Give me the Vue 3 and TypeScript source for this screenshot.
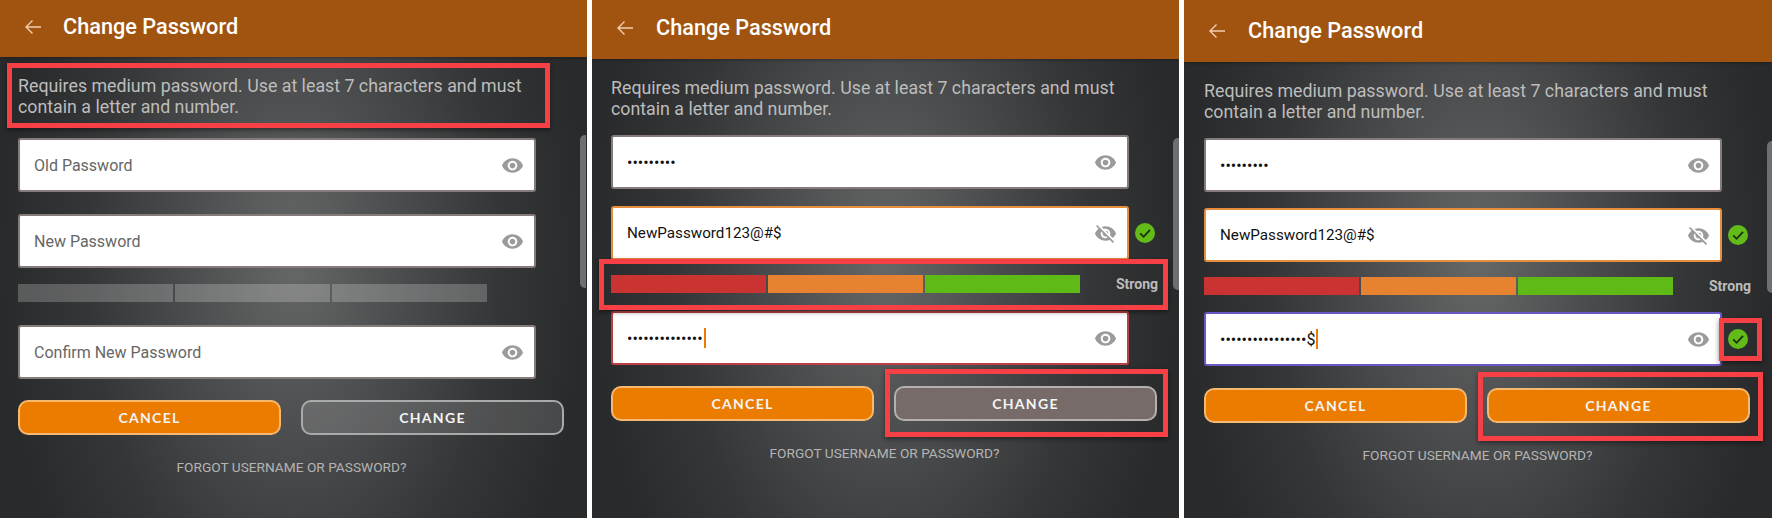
<script setup lang="ts">
type Field = {
  placeholder?: string
  value?: string
  state?: 'active' | 'error' | 'focus'
  hidden?: boolean
  caret?: boolean
  valid?: boolean
}

type Screen = {
  id: string
  fields: Field[]
  lit: boolean
  label?: string
  changeClass: string
  marks: string[]
}

const eye =
  'M12 4.5C7 4.5 2.73 7.61 1 12c1.73 4.39 6 7.5 11 7.5s9.27-3.11 11-7.5c-1.73-4.39-6-7.5-11-7.5zM12 17c-2.76 0-5-2.24-5-5s2.24-5 5-5 5 2.24 5 5-2.24 5-5 5zm0-8c-1.66 0-3 1.34-3 3s1.34 3 3 3 3-1.34 3-3-1.34-3-3-3z'
const eyeOff =
  'M12 7c2.76 0 5 2.24 5 5 0 .65-.13 1.26-.36 1.83l2.92 2.92c1.51-1.26 2.7-2.89 3.43-4.75-1.73-4.39-6-7.5-11-7.5-1.4 0-2.74.25-3.98.7l2.16 2.16C10.74 7.13 11.35 7 12 7zM2 4.27l2.28 2.28.46.46C3.08 8.3 1.78 10.02 1 12c1.73 4.39 6 7.5 11 7.5 1.55 0 3.03-.3 4.38-.84l.42.42L19.73 22 21 20.73 3.27 3 2 4.27zM7.53 9.8l1.55 1.55c-.05.21-.08.43-.08.65 0 1.66 1.34 3 3 3 .22 0 .44-.03.65-.08l1.55 1.55c-.67.33-1.41.53-2.2.53-2.76 0-5-2.24-5-5 0-.79.2-1.53.53-2.2zm4.31-.78l3.15 3.15.02-.16c0-1.66-1.34-3-3-3l-.17.01z'

const oldDots = '•••••••••'

const isMasked = (field: Field) => field.value?.startsWith('•') ?? false

const screens: Screen[] = [
  {
    id: 's1',
    fields: [
      { placeholder: 'Old Password' },
      { placeholder: 'New Password' },
      { placeholder: 'Confirm New Password' },
    ],
    lit: false,
    changeClass: 'btn-idle',
    marks: ['mark-note'],
  },
  {
    id: 's2',
    fields: [
      { value: oldDots },
      { value: 'NewPassword123@#$', state: 'active', hidden: true, valid: true },
      { value: '••••••••••••••', state: 'error', caret: true },
    ],
    lit: true,
    label: 'Strong',
    changeClass: 'btn-muted',
    marks: ['mark-bars', 'mark-change'],
  },
  {
    id: 's3',
    fields: [
      { value: oldDots },
      { value: 'NewPassword123@#$', state: 'active', hidden: true, valid: true },
      { value: '••••••••••••••••$', state: 'focus', caret: true, valid: true },
    ],
    lit: true,
    label: 'Strong',
    changeClass: 'btn-orange',
    marks: ['mark-check', 'mark-change'],
  },
]
</script>

<template>
  <div class="page">
    <section v-for="screen in screens" :key="screen.id" class="screen" :class="screen.id">
      <header class="topbar">
        <svg class="back" width="18" height="16" viewBox="0 0 18 16" fill="none">
          <path d="M17 8H2M8.5 1.5 2 8l6.5 6.5" stroke="currentColor" stroke-width="1.4" />
        </svg>
        <h1>Change Password</h1>
      </header>

      <div class="body">
        <p class="note">Requires medium password. Use at least 7 characters and must contain a letter and number.</p>

        <template v-for="(field, i) in screen.fields" :key="i">
          <div v-if="i === 2" class="strength">
            <div class="bars" :class="{ lit: screen.lit }">
              <span></span><span></span><span></span>
            </div>
            <span v-if="screen.label" class="strength-label">{{ screen.label }}</span>
          </div>
          <div class="field-row" :class="{ 'field-second': i === 1 }">
            <div class="field" :class="field.state">
              <span v-if="field.placeholder" class="placeholder">{{ field.placeholder }}</span>
              <span v-else class="value" :class="{ masked: isMasked(field) }">{{ field.value }}<i v-if="field.caret" class="caret"></i></span>
              <svg class="eye" width="23" height="23" viewBox="0 0 24 24">
                <path :d="field.hidden ? eyeOff : eye" fill="#9b9b9b" />
              </svg>
            </div>
            <svg v-if="field.valid" class="tick" width="20" height="20" viewBox="0 0 20 20">
              <circle cx="10" cy="10" r="10" fill="#62bb18" />
              <path d="M5.2 10.4 8.6 13.8 15 6.8" fill="none" stroke="#17310a" stroke-width="1.8" />
            </svg>
          </div>
        </template>

        <div class="actions">
          <button class="btn btn-orange" type="button">CANCEL</button>
          <button class="btn" :class="screen.changeClass" type="button">CHANGE</button>
        </div>

        <a class="forgot">FORGOT USERNAME OR PASSWORD?</a>
      </div>

      <div class="scrollbar"></div>
      <div v-for="mark in screen.marks" :key="mark" class="mark" :class="mark"></div>
    </section>
  </div>
</template>

<style scoped>
.page {
  display: flex;
  gap: 5px;
  width: 1772px;
  height: 518px;
  overflow: hidden;
  background: #fff;
  font-family: Roboto, "Liberation Sans", sans-serif;
}
.screen {
  position: relative;
  flex: none;
  width: 587px;
  height: 518px;
  overflow: hidden;
  background: radial-gradient(ellipse 50% 96% at 50% 50%, #666767 0%, #4c4d4e 36%, #353637 70%, #292a2b 100%);
}
.s1 {
  --head: 57px;
  --head-pb: 4px;
  --pad: 18px;
  --title-gap: 21px;
  --note-gap: 21.5px;
  --field-gap: 22px;
  --bar-top: 16px;
  --bar-bottom: 23px;
  --act-top: 21px;
}
.s2 {
  --head: 59px;
  --head-pb: 4px;
  --pad: 19px;
  --title-gap: 22px;
  --note-gap: 16.5px;
  --field-gap: 17px;
  --bar-top: 15px;
  --bar-bottom: 18px;
  --act-top: 21px;
}
.s3 {
  --head: 62px;
  --head-pb: 1px;
  --pad: 20px;
  --title-gap: 22px;
  --note-gap: 16.5px;
  --field-gap: 16px;
  --bar-top: 15px;
  --bar-bottom: 17px;
  --act-top: 22px;
  width: 589px;
}
.topbar {
  display: flex;
  align-items: center;
  box-sizing: border-box;
  height: var(--head);
  padding: 0 0 var(--head-pb) 24px;
  background: #a0540f;
  box-shadow: 0 1px 3px rgba(0, 0, 0, 0.3);
}
.back {
  color: #f2cdb2;
}
.topbar h1 {
  margin: 0 0 0 var(--title-gap);
  color: #fff;
  font-size: 21.7px;
  font-weight: 500;
}
.body {
  padding: 17.5px 0 0 var(--pad);
}
.note {
  width: 530px;
  margin: 0 0 var(--note-gap);
  color: #bdbdbd;
  font-size: 17.8px;
  line-height: 21px;
}
.field-row {
  display: flex;
  align-items: center;
  gap: 6px;
}
.field-second {
  margin-top: var(--field-gap);
}
.field {
  display: flex;
  align-items: center;
  justify-content: space-between;
  box-sizing: border-box;
  width: 518px;
  height: 54px;
  padding: 0 10px 0 14px;
  background: #fff;
  border: 2px solid #857b7b;
  border-radius: 3px;
}
.field.active {
  border-color: #e68d3e;
}
.field.error {
  border-color: #bb4044;
}
.field.focus {
  border-color: #6a58c6;
}
.placeholder {
  color: #666;
  font-size: 16px;
}
.value {
  display: flex;
  align-items: center;
  color: #111;
  font-size: 15.2px;
}
.value.masked {
  font-size: 16px;
}
.caret {
  width: 2px;
  height: 20px;
  margin-left: 1px;
  background: #ec7c00;
}
.strength {
  display: flex;
  align-items: center;
  justify-content: space-between;
  width: 547px;
  height: 18px;
  margin: var(--bar-top) 0 var(--bar-bottom);
}
.bars {
  display: flex;
  gap: 2px;
  width: 469px;
  height: 18px;
}
.bars span {
  flex: 1;
  background: rgba(255, 255, 255, 0.22);
}
.bars.lit span:nth-child(1) {
  background: #c93433;
}
.bars.lit span:nth-child(2) {
  background: #e68230;
}
.bars.lit span:nth-child(3) {
  background: #5fba18;
}
.strength-label {
  color: #bcbcbc;
  font-size: 14px;
  font-weight: 700;
}
.actions {
  display: flex;
  gap: 20px;
  margin-top: var(--act-top);
}
.btn {
  box-sizing: border-box;
  width: 263px;
  height: 35px;
  padding: 0;
  border: 2px solid #a9aaaa;
  border-radius: 10px;
  color: #f4f4f4;
  font-family: Lato, "Open Sans", sans-serif;
  font-size: 14px;
  font-weight: 700;
  letter-spacing: 1.3px;
}
.btn-orange {
  background: #ec7c00;
  border-color: #f5b96f;
}
.btn-idle {
  background: rgba(255, 255, 255, 0.14);
}
.btn-muted {
  background: #776b69;
  border-color: #b5b0ae;
}
.forgot {
  display: block;
  width: 547px;
  margin-top: 23px;
  color: #b4b4b4;
  font-size: 13.7px;
  line-height: 18px;
  text-align: center;
}
.scrollbar {
  position: absolute;
  top: 138px;
  right: 0;
  width: 6px;
  height: 152px;
  background: #6e6f70;
  border-radius: 5px 0 0 5px;
}
.s1 .scrollbar {
  top: 135px;
  height: 153px;
  right: 1px;
}
.s3 .scrollbar {
  top: 141px;
}
.mark {
  position: absolute;
  box-sizing: border-box;
  border: 5px solid #f64045;
  box-shadow: 0 2px 5px rgba(0, 0, 0, 0.45);
}
.mark-note {
  left: 7px;
  top: 63px;
  width: 543px;
  height: 65px;
}
.mark-bars {
  left: 7px;
  top: 259px;
  width: 569px;
  height: 51px;
}
.s2 .mark-change {
  left: 293px;
  top: 369px;
  width: 283px;
  height: 68px;
}
.s3 .mark-change {
  left: 294px;
  top: 372px;
  width: 285px;
  height: 69px;
}
.mark-check {
  left: 535px;
  top: 318px;
  width: 43px;
  height: 43px;
}
</style>

<style>
html,
body {
  margin: 0;
  background: #fff;
}
</style>
